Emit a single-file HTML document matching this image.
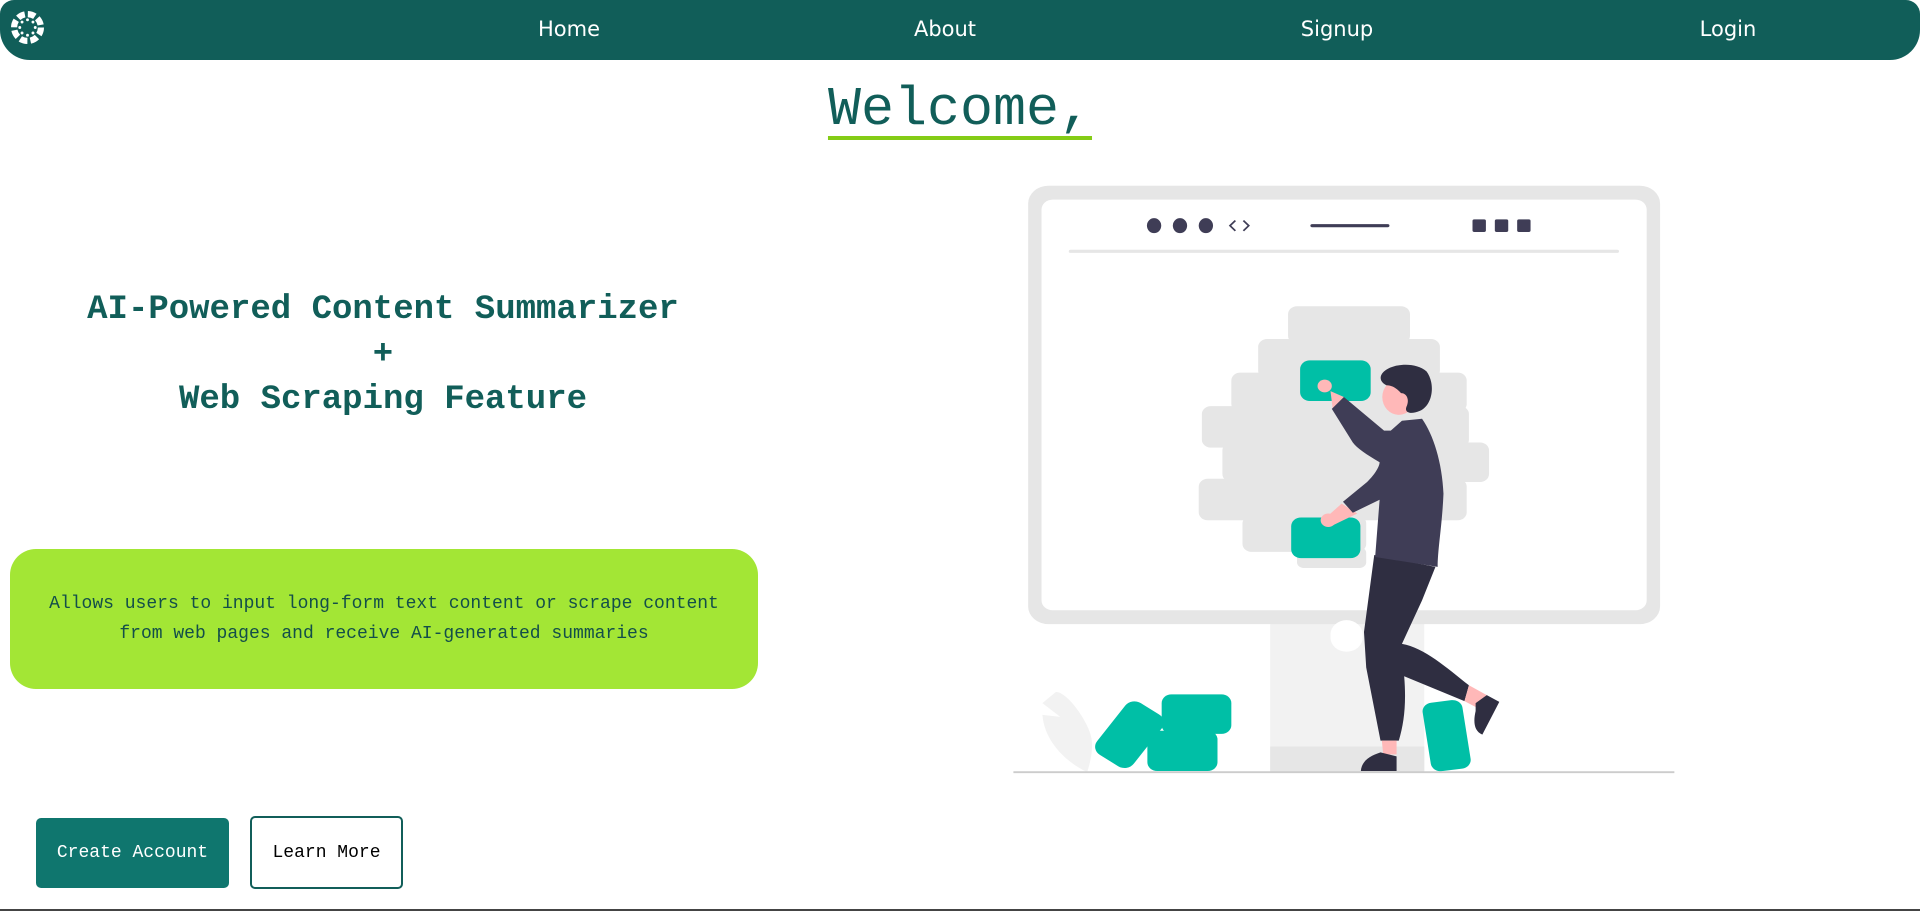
<!DOCTYPE html>
<html><head><meta charset="utf-8">
<style>
*{margin:0;padding:0;box-sizing:border-box}
body{width:1920px;height:911px;background:#fff;position:relative;overflow:hidden;font-family:"Liberation Mono","DejaVu Sans Mono",monospace}
.nav{position:absolute;left:0;top:0;width:1920px;height:60px;background:#115e59;border-radius:14px 14px 30px 30px}
.nav a{position:absolute;top:17px;color:#fff;font-family:"DejaVu Sans","Liberation Sans",sans-serif;font-size:21px;text-decoration:none;transform:translateX(-50%)}
.welcome{position:absolute;left:0;width:1920px;top:78px;text-align:center;font-size:55px;color:#115e59;text-decoration:underline;text-decoration-color:#84cc16;text-decoration-thickness:4px;text-underline-offset:12px}
.h{position:absolute;left:0;width:766px;top:288px;text-align:center;font-size:34px;font-weight:bold;color:#115e59;line-height:45px}
.box{position:absolute;left:10px;top:549px;width:748px;height:140px;background:#a3e635;border-radius:26px;display:flex;align-items:center;justify-content:center;text-align:center;font-size:18px;line-height:30px;color:#134e4a}
.b1{position:absolute;left:36px;top:818px;width:193px;height:70px;background:#0f766e;color:#fff;border-radius:5px;font-size:18px;display:flex;align-items:center;justify-content:center}
.b2{position:absolute;left:250px;top:816px;width:153px;height:73px;border:2px solid #115e59;color:#000;border-radius:5px;font-size:18px;display:flex;align-items:center;justify-content:center}
.bl{position:absolute;left:0;top:909px;width:1920px;height:2px;background:#444}
</style></head><body>
<div class="nav">
<svg style="position:absolute;left:11px;top:11px" width="33" height="33" viewBox="0 0 32 32">
<g fill="#fff">
<circle cx="16" cy="16" r="13" fill="none" stroke="#fff" stroke-width="6" stroke-dasharray="7.2 3"/>
<circle cx="16" cy="8.5" r="1.4"/><circle cx="16" cy="23.5" r="1.4"/><circle cx="8.5" cy="16" r="1.4"/><circle cx="23.5" cy="16" r="1.4"/>
<circle cx="10.7" cy="10.7" r="1.4"/><circle cx="21.3" cy="10.7" r="1.4"/><circle cx="10.7" cy="21.3" r="1.4"/><circle cx="21.3" cy="21.3" r="1.4"/>
</g></svg>
<a style="left:569px">Home</a><a style="left:945px">About</a><a style="left:1337px">Signup</a><a style="left:1728px">Login</a>
</div>
<div class="welcome">Welcome,</div>
<div class="h">AI-Powered Content Summarizer<br>+<br>Web Scraping Feature</div>
<div class="box">Allows users to input long-form text content or scrape content<br>from web pages and receive AI-generated summaries</div>
<div class="b1">Create Account</div>
<div class="b2">Learn More</div>
<div class="bl"></div>
<svg style="position:absolute;left:1000px;top:170px" width="690" height="616" viewBox="0 0 1545 1560" preserveAspectRatio="none">
<rect x="605" y="1140" width="345" height="385" fill="#f2f2f2"/>
<rect x="605" y="1460" width="345" height="65" fill="#e6e6e6"/>
<rect x="63" y="40" width="1415" height="1110" rx="45" fill="#e6e6e6"/>
<rect x="93" y="75" width="1355" height="1040" rx="25" fill="#fff"/>
<rect x="740" y="1140" width="72" height="80" rx="36" fill="#fff"/>
<g fill="#3f3d56"><ellipse cx="345" cy="141" rx="16" ry="19"/><ellipse cx="403" cy="141" rx="16" ry="19"/><ellipse cx="461" cy="141" rx="16" ry="19"/>
<rect x="1058" y="125" width="30" height="32" rx="4"/><rect x="1108" y="125" width="30" height="32" rx="4"/><rect x="1158" y="125" width="30" height="32" rx="4"/></g>
<path d="M527 128 L515 141 L527 154 M545 128 L557 141 L545 154" stroke="#3f3d56" stroke-width="4" fill="none"/>
<line x1="699" y1="141" x2="868" y2="141" stroke="#3f3d56" stroke-width="8" stroke-linecap="round"/>
<line x1="158" y1="206" x2="1382" y2="206" stroke="#e6e6e6" stroke-width="8" stroke-linecap="round"/>
<g fill="#e6e6e6">
<rect x="645" y="345" width="273" height="95" rx="20"/><rect x="578" y="428" width="407" height="100" rx="20"/>
<rect x="518" y="513" width="527" height="100" rx="20"/><rect x="452" y="598" width="598" height="105" rx="20"/>
<rect x="498" y="690" width="597" height="100" rx="20"/><rect x="445" y="782" width="600" height="105" rx="20"/>
<rect x="543" y="875" width="277" height="92" rx="20"/><rect x="665" y="955" width="155" height="53" rx="15"/>
</g>
<path d="M125 1322 C150 1320 200 1400 205 1440 C210 1480 195 1525 195 1525 C150 1500 100 1450 95 1380 L135 1385 L95 1350 Z" fill="#f2f2f2"/>
<g fill="#00bfa6">
<rect x="672" y="482" width="158" height="103" rx="22"/><rect x="652" y="880" width="155" height="103" rx="22"/>
<rect x="362" y="1328" width="156" height="100" rx="22"/><rect x="330" y="1420" width="157" height="102" rx="22"/>
<rect x="240" y="1350" width="100" height="160" rx="25" transform="rotate(35 290 1430)"/>
<rect x="955" y="1345" width="90" height="175" rx="22" transform="rotate(-8 1000 1432)"/>
</g>
<path d="M838 975 L975 1005 L945 1090 L900 1200 C950 1210 1000 1260 1050 1305 L1040 1345 L905 1282 C910 1350 905 1400 893 1445 L852 1445 L820 1260 L815 1170 Z" fill="#2f2e41"/>
<path d="M855 1445 L888 1445 L888 1480 L858 1480 Z M1040 1345 L1050 1305 L1090 1330 L1065 1360 Z" fill="#ffb8b8"/>
<path d="M808 1522 C810 1490 840 1480 852 1475 L888 1485 L888 1522 Z M1065 1350 L1090 1330 L1118 1347 L1080 1430 C1060 1420 1060 1395 1065 1370 Z" fill="#2f2e41"/>
<path d="M740 560 L770 575 L760 610 L745 605 Z M765 845 L800 870 L745 900 L730 880 Z" fill="#ffb8b8"/>
<circle cx="727" cy="547" r="16" fill="#ffb8b8"/><circle cx="735" cy="887" r="17" fill="#ffb8b8"/>
<path d="M875 660 L900 635 L945 630 C970 670 990 740 993 820 C990 900 980 960 980 1005 L840 980 L850 835 L790 868 L768 840 L822 790 C840 770 850 750 850 740 C820 720 800 705 790 690 L743 605 L770 575 L860 660 Z" fill="#3f3d56"/>
<ellipse cx="893" cy="575" rx="37" ry="45" fill="#ffb8b8"/>
<path d="M860 510 C880 490 930 485 955 510 C975 540 970 595 940 610 C920 620 905 615 910 600 C918 580 910 565 898 565 C890 555 880 545 865 545 C848 535 850 520 860 510 Z" fill="#2f2e41"/>
<line x1="30" y1="1525" x2="1510" y2="1525" stroke="#cccccc" stroke-width="5"/>
</svg>
</body></html>
